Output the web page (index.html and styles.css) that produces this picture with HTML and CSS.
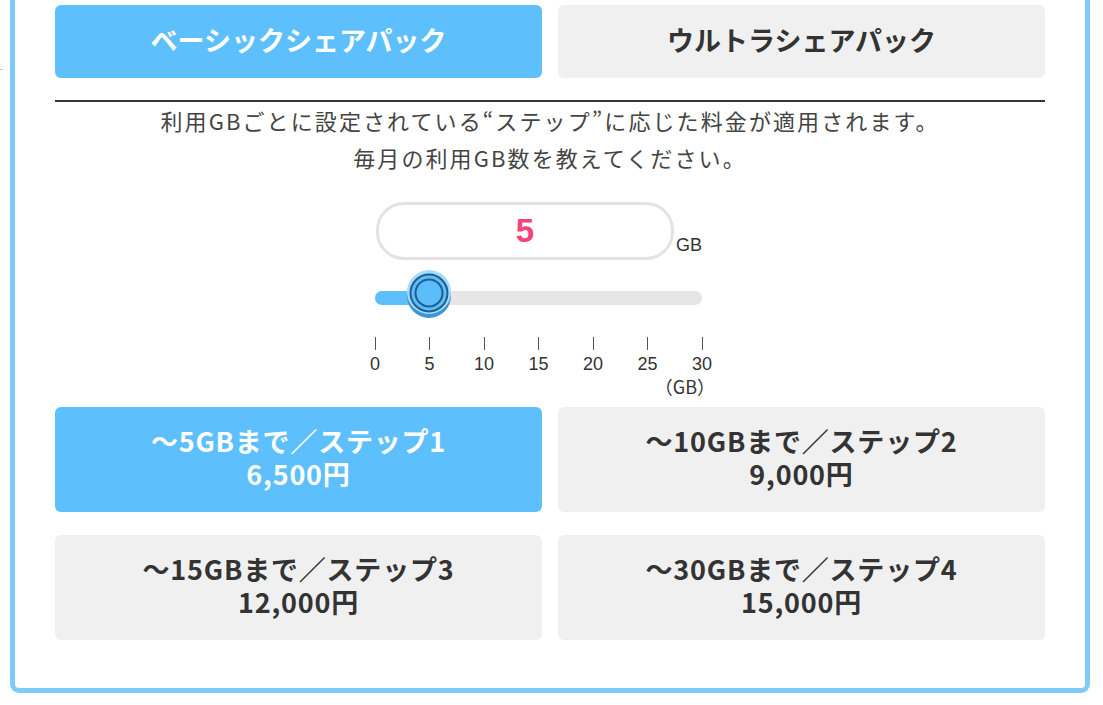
FILE: index.html
```html
<!DOCTYPE html>
<html lang="ja">
<head>
    <meta charset="UTF-8">
    <meta name="viewport" content="width=device-width, initial-scale=1.0">
    <title>シェアパック料金シミュレーション</title>
    <link rel="stylesheet" href="styles.css">
</head>
<body>
    <span class="edge-mark"></span>
    <div class="panel">
        <div class="tabs">
            <button class="tab active">ベーシックシェアパック</button>
            <button class="tab">ウルトラシェアパック</button>
        </div>
        <p class="lead">
            利用GBごとに設定されている“ステップ”に応じた料金が適用されます。<br>
            毎月の利用GB数を教えてください。
        </p>
        <div class="gauge">
            <div class="amount-row">
                <div class="amount">5</div>
                <span class="unit">GB</span>
            </div>
            <div class="slider">
                <div class="track">
                    <div class="fill" style="width: 53px"></div>
                </div>
                <svg class="thumb" style="left: 30px" width="48" height="50" viewBox="0 0 48 50">
                    <circle cx="24" cy="27" r="22" fill="#3f94d6"/>
                    <circle cx="24" cy="23" r="22" fill="#a6dbfb"/>
                    <circle cx="24" cy="24" r="18.5" fill="#5bbefa" stroke="#1f5f8f" stroke-width="2"/>
                    <circle cx="24" cy="24" r="13.5" fill="none" stroke="#1f5f8f" stroke-width="2"/>
                </svg>
            </div>
            <div class="ticks">
                <div class="tick"><i></i><span>0</span></div>
                <div class="tick"><i></i><span>5</span></div>
                <div class="tick"><i></i><span>10</span></div>
                <div class="tick"><i></i><span>15</span></div>
                <div class="tick"><i></i><span>20</span></div>
                <div class="tick"><i></i><span>25</span></div>
                <div class="tick"><i></i><span>30</span></div>
            </div>
            <div class="ticks-unit">（GB）</div>
        </div>
        <div class="steps">
            <div class="step active">～5GBまで／ステップ1<br>6,500円</div>
            <div class="step">～10GBまで／ステップ2<br>9,000円</div>
            <div class="step">～15GBまで／ステップ3<br>12,000円</div>
            <div class="step">～30GBまで／ステップ4<br>15,000円</div>
        </div>
    </div>
</body>
</html>
```

FILE: styles.css
```css
body {
    font-family: 'Noto Sans CJK JP', 'Noto Sans', sans-serif;
    background: #ffffff;
    color: #333;
    margin: 0;
    padding: 0;
}
.edge-mark {
    position: absolute;
    left: 0;
    top: 69px;
    width: 3px;
    height: 1px;
    background-color: #9fd7f8;
}
.panel {
    margin: 0 13px 0 10px;
    border: 5px solid #7ecbf9;
    border-top: none;
    border-radius: 0 0 9px 9px;
    padding: 5px 40px 48px;
}
.tabs {
    display: grid;
    grid-template-columns: 1fr 1fr;
    gap: 16px;
}
.tab {
    font-family: inherit;
    height: 73px;
    border: none;
    border-radius: 6px;
    background-color: #f0f0f0;
    color: #333;
    font-size: 27px;
    font-weight: bold;
    cursor: pointer;
    padding: 0 0 4px;
}
.tab.active {
    background-color: #5dbffc;
    color: #fff;
}
.lead {
    margin: 22px 0 0;
    border-top: 2px solid #333;
    padding-top: 0;
    text-align: center;
    font-size: 22px;
    letter-spacing: 2.1px;
    line-height: 37px;
    color: #444;
}
.gauge {
    width: 350px;
    margin: 26px auto 0;
}
.amount-row {
    display: flex;
    align-items: flex-end;
    margin-left: 1px;
}
.amount {
    width: 292px;
    height: 52px;
    border: 3px solid #e3e3e3;
    border-radius: 28px;
    display: flex;
    align-items: center;
    justify-content: center;
    font-size: 33px;
    font-weight: bold;
    color: #f4437b;
    font-family: 'Liberation Sans', Arial, sans-serif;
}
.unit {
    font-size: 18px;
    margin: 0 0 4px 2px;
    font-family: 'Liberation Sans', Arial, sans-serif;
}
.slider {
    position: relative;
    width: 327px;
    margin-top: 31px;
    height: 14px;
}
.track {
    height: 14px;
    border-radius: 7px;
    background-color: #e6e6e6;
    overflow: hidden;
}
.fill {
    height: 100%;
    background-color: #5dbffc;
}
.thumb {
    position: absolute;
    top: -22px;
}
.ticks {
    display: flex;
    justify-content: space-between;
    width: 357px;
    margin: 32px 0 0 -15px;
}
.tick {
    width: 30px;
    display: flex;
    flex-direction: column;
    align-items: center;
    font-family: 'Liberation Sans', Arial, sans-serif;
    font-size: 18px;
    color: #333;
}
.tick i {
    display: block;
    width: 1px;
    height: 13px;
    background-color: #555;
}
.tick span {
    margin-top: 4px;
    line-height: 20px;
}
.ticks-unit {
    width: 340px;
    text-align: right;
    font-size: 18px;
    line-height: 22px;
    margin-top: 1px;
}
.steps {
    display: grid;
    grid-template-columns: 1fr 1fr;
    column-gap: 16px;
    row-gap: 23px;
    margin-top: 10px;
}
.step {
    height: 105px;
    box-sizing: border-box;
    padding-bottom: 6px;
    border-radius: 6px;
    background-color: #f0f0f0;
    display: flex;
    align-items: center;
    justify-content: center;
    text-align: center;
    font-size: 27px;
    letter-spacing: 0.8px;
    font-weight: bold;
    line-height: 33px;
    color: #333;
}
.step.active {
    background-color: #5dbffc;
    color: #fff;
}
```
